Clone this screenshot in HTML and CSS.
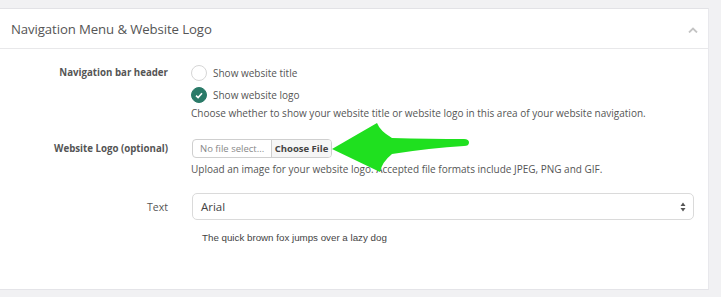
FILE: index.html
```html
<!DOCTYPE html>
<html lang="en">
<head>
    <meta charset="UTF-8">
    <title>Navigation Menu &amp; Website Logo</title>
    <link rel="stylesheet" href="styles.css">
</head>
<body>
    <div class="panel">
        <div class="panel-header">
            <h3>Navigation Menu &amp; Website Logo</h3>
            <svg class="chevron" width="10" height="6" viewBox="0 0 10 6">
                <path d="M1 5.5 L5 1.5 L9 5.5" fill="none" stroke="#c4c4c4" stroke-width="1.8"/>
            </svg>
        </div>

        <div class="panel-body">
            <div class="form-row row-nav">
                <label class="form-label">Navigation bar header</label>
                <div class="form-control">
                    <div class="radio">
                        <span class="radio-dot"></span>
                        <span>Show website title</span>
                    </div>
                    <div class="radio">
                        <span class="radio-dot checked">
                            <svg width="8" height="7" viewBox="0 0 8 7">
                                <path d="M1 3.6 L3.1 5.6 L7 1.3" fill="none" stroke="#fff" stroke-width="1.6"/>
                            </svg>
                        </span>
                        <span>Show website logo</span>
                    </div>
                    <p class="help">Choose whether to show your website title or website logo in this area of your website navigation.</p>
                </div>
            </div>

            <div class="form-row row-logo">
                <label class="form-label">Website Logo (optional)</label>
                <div class="form-control">
                    <div class="file-input">
                        <span class="file-name">No file select...</span>
                        <span class="file-button">Choose File</span>
                    </div>
                    <p class="help">Upload an image for your website logo. Accepted file formats include JPEG, PNG and GIF.</p>
                </div>
            </div>

            <div class="form-row row-text">
                <label class="form-label">Text</label>
                <div class="form-control">
                    <div class="select">
                        <span>Arial</span>
                        <svg class="select-arrows" width="6" height="10" viewBox="0 0 6 10">
                            <path d="M3 0.5 L5.5 4 L0.5 4 Z M3 9.5 L5.5 6 L0.5 6 Z" fill="#555"/>
                        </svg>
                    </div>
                    <p class="preview">The quick brown fox jumps over a lazy dog</p>
                </div>
            </div>
        </div>

        <!-- annotation arrow drawn over the form -->
        <svg class="pointer" width="145" height="60" viewBox="0 0 145 60">
            <path d="M2 29 L47 3 Q50 11 62 18 Q100 19 134 19 Q139 19 139 22.5 Q139 26 134 26 Q100 28 62 34 Q52 42 50 52 Z" fill="#1fe01f"/>
        </svg>
    </div>
</body>
</html>
```

FILE: styles.css
```css
body {
    margin: 0;
    background-color: #f1f1f3;
    font-family: 'Open Sans', Arial, sans-serif;
    color: #555;
}
.panel {
    position: relative;
    width: 709px;
    height: 282px;
    margin-top: 8px;
    box-sizing: border-box;
    background-color: #ffffff;
    border-top: 1px solid #e2e2e6;
    border-right: 1px solid #e8e8ec;
    border-bottom: 1px solid #e4e4e8;
}
.panel-header {
    display: flex;
    align-items: center;
    justify-content: space-between;
    height: 39px;
    padding: 0 10px 0 11px;
    border-bottom: 1px solid #e8e8ea;
}
.panel-header h3 {
    margin: 0;
    font-size: 13.2px;
    font-weight: normal;
    color: #555;
    letter-spacing: -0.1px;
}
.chevron {
    margin-top: 2px;
}
.panel-body {
    padding-top: 13px;
}
.form-row {
    display: flex;
    align-items: flex-start;
}
.form-label {
    width: 168px;
    flex-shrink: 0;
    text-align: right;
    font-size: 9.7px;
    font-weight: bold;
    color: #555;
}
.form-control {
    margin-left: 23px;
    flex: 1;
    padding-right: 14px;
}
.radio {
    display: flex;
    align-items: center;
    height: 22px;
    font-size: 10px;
    color: #555;
}
.radio-dot {
    display: flex;
    align-items: center;
    justify-content: center;
    width: 14px;
    height: 14px;
    border: 1px solid #d6d6d6;
    border-radius: 50%;
    margin-right: 6px;
}
.radio-dot.checked {
    background-color: #2a7a68;
    border-color: #2a7a68;
}
.help {
    margin: 0;
    font-size: 10px;
    color: #555;
}
.row-nav .form-label {
    margin-top: 4px;
}
.row-logo {
    margin-top: 19px;
}
.row-logo .form-label {
    margin-top: 3px;
}
.file-input {
    display: flex;
    width: 138px;
    height: 17px;
    margin-left: 1px;
    border: 1px solid #cfcfcf;
    border-radius: 4px;
    font-size: 9.5px;
    overflow: hidden;
}
.file-name {
    width: 79px;
    padding-left: 7px;
    box-sizing: border-box;
    line-height: 17px;
    color: #888;
    border-right: 1px solid #cfcfcf;
}
.file-button {
    flex: 1;
    text-align: center;
    line-height: 18px;
    font-weight: bold;
    color: #444;
    background-color: #f6f6f6;
}
.row-logo .help {
    margin-top: 4px;
}
.row-text {
    margin-top: 17px;
}
.row-text .form-label {
    margin-top: 7px;
    font-weight: normal;
    font-size: 10.5px;
}
.select {
    display: flex;
    align-items: center;
    justify-content: space-between;
    height: 25px;
    margin-left: 1px;
    padding: 0 7px 0 8px;
    border: 1px solid #dadada;
    border-radius: 5px;
    font-size: 11.5px;
    color: #444;
}
.select-arrows {
    margin-top: 1px;
}
.preview {
    margin: 12px 0 0 11px;
    font-family: 'Liberation Sans', Arial, sans-serif;
    font-size: 9.75px;
    color: #444;
}
.pointer {
    position: absolute;
    left: 330px;
    top: 111px;
}
```
